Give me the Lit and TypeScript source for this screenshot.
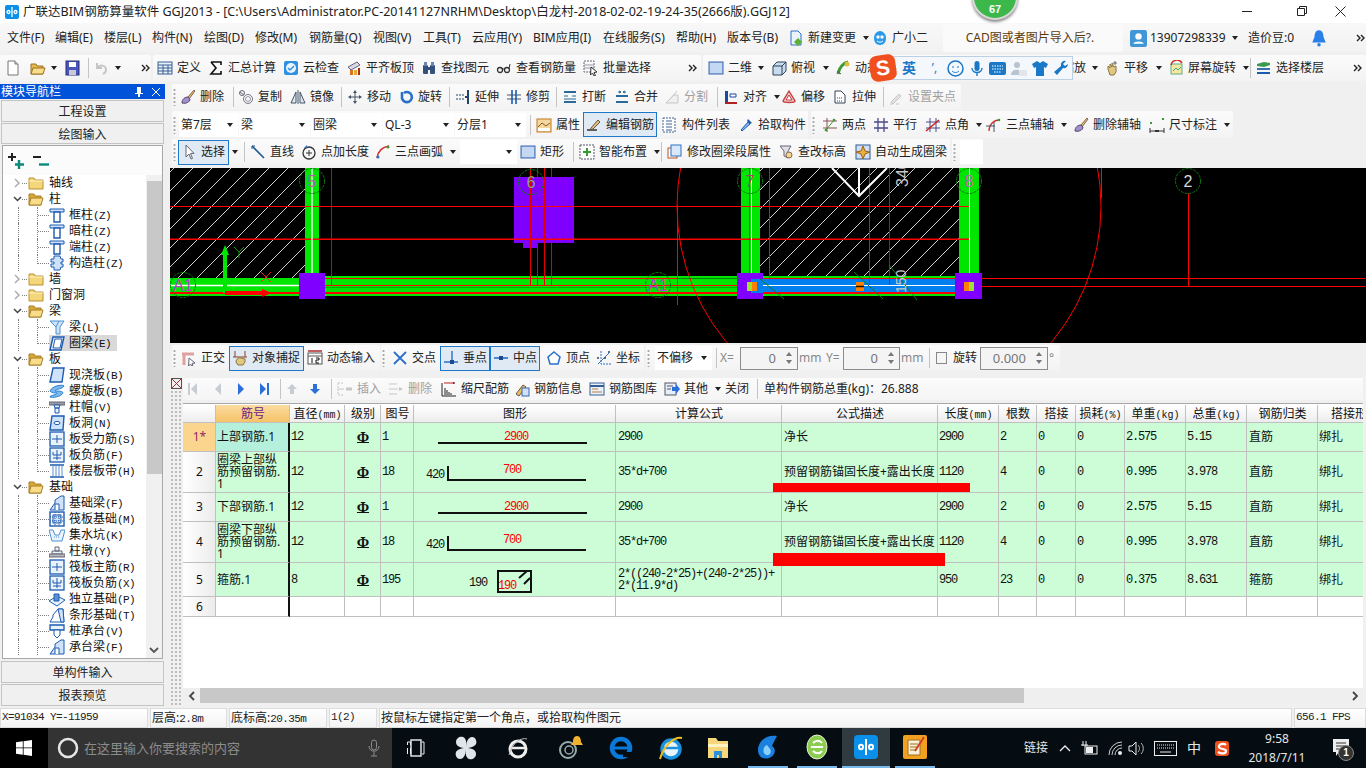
import { LitElement, html, css, svg, TemplateResult } from "lit";
import { customElement } from "lit/decorators.js";
import { classMap } from "lit/directives/class-map.js";

type Item = {
  i?: string; t?: string; w: number; a?: boolean; on?: boolean; off?: boolean;
  sep?: boolean; grip?: boolean; dd?: string; gap?: boolean; lbl?: string; spin?: string; chk?: boolean;
};

const B = "#1c5bb0", L = "#cfe2fb";
const I: Record<string, TemplateResult> = {
  new: svg`<path d="M3 1h7l3 3v11H3z" fill="#fff" stroke="#777"/><path d="M10 1v3h3" fill="#ddd" stroke="#777"/>`,
  open: svg`<path d="M1 4h5l1 2h6v8H1z" fill="#e8b850" stroke="#9a7420"/><path d="M3 8h12l-2 6H1z" fill="#f6dc8c" stroke="#9a7420"/>`,
  save: svg`<rect x="2" y="1" width="13" height="14" fill="#4a55b8" stroke="#26307c"/><rect x="5" y="2" width="7" height="5" fill="#fff"/><rect x="5" y="10" width="7" height="5" fill="#c8c8d8"/>`,
  undo: svg`<path d="M4 3v5h5M4 8c3-4 9-3 9 2 0 2-1 3-3 4" fill="none" stroke="#bbb" stroke-width="2"/>`,
  def: svg`<rect x="1" y="2" width="14" height="12" fill="#e8f0fa" stroke="#3a5f92"/><path d="M1 5h14M1 8h14M1 11h14M6 5v9M11 5v9" stroke="#3a5f92"/>`,
  sigma: svg`<path d="M3 2h10v3M13 14H3l5-6-5-6M3 14h10v-3" fill="none" stroke="#111" stroke-width="1.6"/>`,
  cloud: svg`<rect x="1" y="1" width="14" height="14" rx="2" fill="#2f8fe0"/><circle cx="8" cy="8" r="5" fill="#eaf4fd"/><path d="M5 8l2 2 4-4" fill="none" stroke="#2f8fe0" stroke-width="1.5"/>`,
  flat: svg`<path d="M2 7l9-5 3 3-9 5z" fill="#d8d8e8" stroke="#667"/><rect x="4" y="10" width="3" height="5" fill="#d87020"/><rect x="8" y="10" width="3" height="5" fill="#e8a830"/><rect x="12" y="8" width="2" height="7" fill="#a83010"/>`,
  find: svg`<rect x="2" y="5" width="5" height="9" rx="1" fill="#34507c"/><rect x="9" y="5" width="5" height="9" rx="1" fill="#34507c"/><rect x="3" y="2" width="3" height="4" fill="#6a86ac"/><rect x="10" y="2" width="3" height="4" fill="#6a86ac"/><rect x="6" y="7" width="4" height="3" fill="#34507c"/>`,
  glass: svg`<circle cx="4" cy="10" r="2.5" fill="none" stroke="#333" stroke-width="1.3"/><circle cx="11" cy="10" r="2.5" fill="none" stroke="#333" stroke-width="1.3"/><path d="M6 9h3M13 9l1-5" stroke="#333"/>`,
  batch: svg`<rect x="1" y="1" width="10" height="11" fill="none" stroke="#667" stroke-dasharray="2 1"/><path d="M1 5h10M1 8h10" stroke="#99a"/><path d="M8 7l6 5-3 .5 1.5 3-1.5.5-1.5-3-2 2z" fill="#fff" stroke="#333"/>`,
  rect: svg`<rect x="1" y="2" width="14" height="12" fill="#a8c4ee" stroke="#3a68b0"/><rect x="2" y="3" width="12" height="10" fill="#c4d8f4"/>`,
  cube: svg`<path d="M2 6l4-4h9v9l-4 4H2z" fill="#c8dcf0" stroke="#345"/><path d="M2 6h9v9M11 6l4-4" fill="none" stroke="#345"/>`,
  orbit: svg`<path d="M3 14C4 8 8 3 13 2" stroke="#3a9a30" stroke-width="3" fill="none"/><circle cx="12" cy="4" r="2.5" fill="#d8c040"/><path d="M2 11l4 3" stroke="#556"/>`,
  hand: svg`<path d="M4 9V6l2 2V4l2 3V3l2 4 2-1v6l-2 3H6z" fill="#e0c880" stroke="#8a7440"/><path d="M11 1v4M9 3h4" stroke="#667"/>`,
  screen: svg`<rect x="3" y="4" width="11" height="10" fill="#f4e8a0" stroke="#6a8"/><path d="M3 5a6 6 0 0 1 11-2" fill="none" stroke="#d03020" stroke-width="1.5"/><path d="M5 11l3-3 2 2 3-3" stroke="#3a9" fill="none"/>`,
  floors: svg`<path d="M1 4l7-2 6 1v2L8 7 1 6z" fill="#3a9a50"/><path d="M1 8h13v2H1z" fill="#3a70b0"/><path d="M1 12h13v2H1z" fill="#1c5bb0"/>`,
  del: svg`<path d="M8 8l6-7 1 1-6 8z" fill="#e0c060" stroke="#865"/><path d="M2 14c0-4 3-6 6-6l2 2c0 3-4 5-8 4z" fill="#a090d0" stroke="#546"/>`,
  copy: svg`<path d="M2 3l4 3" stroke="#667"/><circle cx="4" cy="4" r="2.5" fill="none" stroke="#667"/><circle cx="10" cy="10" r="4.5" fill="none" stroke="#778"/><circle cx="10" cy="10" r="2.5" fill="none" stroke="#99a"/>`,
  mirror: svg`<path d="M6 3v11H1zM10 3v11h5z" fill="#dde6f2" stroke="#456"/><path d="M8 1v14" stroke="#456"/>`,
  move: svg`<path d="M8 1l2 3H6zM8 15l-2-3h4zM1 8l3-2v4zM15 8l-3 2V6z" fill="#456"/><path d="M8 3v10M3 8h10" stroke="#456"/>`,
  rotate: svg`<path d="M4 3v4a5 5 0 1 0 2-3" fill="none" stroke="#2a70c8" stroke-width="2.6"/>`,
  extend: svg`<path d="M1 6h8M1 10h8" stroke="#246" stroke-dasharray="2 1"/><path d="M13 1v14" stroke="#246" stroke-width="2"/><rect x="10" y="7" width="2" height="2" fill="#246"/>`,
  trim: svg`<path d="M1 6h14M1 10h14" stroke="#456"/><path d="M6 1v14M10 1v14" stroke="#1c5bb0" stroke-width="1.6"/>`,
  brk: svg`<path d="M2 3h12M2 13h12" stroke="#2a6a9a" stroke-width="2"/><path d="M2 7h4M10 7h4M2 10h12" stroke="#2a6a9a"/>`,
  merge: svg`<path d="M2 7h12M2 13h12" stroke="#2a6a9a" stroke-width="2"/><path d="M4 3h3M9 3h3M5 2l2 1-2 1M11 2L9 3l2 1" fill="none" stroke="#2a6a9a"/>`,
  split: svg`<path d="M2 14l8-8h4v8z" fill="#eee" stroke="#bbb"/><path d="M6 10l7-8" stroke="#bbb"/>`,
  align: svg`<rect x="2" y="2" width="3" height="12" fill="#1c4aa0"/><path d="M7 5h6v3H7z" fill="#fff" stroke="#1c4aa0"/><path d="M2 14h12" stroke="#b02020" stroke-width="2"/>`,
  offset: svg`<path d="M8 2l6 10c0 2-12 2-12 0z" fill="#f6c8c8" stroke="#c04040" stroke-width="1.4"/><path d="M8 6l3 5H5z" fill="#fff" stroke="#c04040"/>`,
  stretch: svg`<path d="M3 2h6l4 4v8H3z" fill="#fff" stroke="#345"/><path d="M5 9h6M5 12h6" stroke="#345" stroke-dasharray="1 1"/>`,
  pen: svg`<path d="M3 13l8-8 2 2-8 8z" fill="#ddd" stroke="#bbb"/><path d="M2 15h3M8 15h3" stroke="#bbb"/>`,
  attr: svg`<rect x="1" y="2" width="14" height="13" fill="#f4d8a0" stroke="#c07820"/><path d="M2 10l4-4 4 3 4-3" stroke="#8a5a10" fill="none"/><rect x="2" y="11" width="12" height="3" fill="#fff"/>`,
  edit: svg`<path d="M1 13h10" stroke="#333" stroke-width="1.5"/><path d="M5 11l7-8 2 2-7 7-3 1z" fill="#e0c080" stroke="#654"/>`,
  list: svg`<rect x="1" y="1" width="12" height="14" fill="#fff" stroke="#3a5f92" stroke-dasharray="2 1"/><path d="M4 4h6M4 7h6M4 10h6M4 13h6" stroke="#3a5f92"/>`,
  pick: svg`<path d="M3 13l7-8 2 2-8 7z" fill="#8ab8e8" stroke="#1c5bb0"/><path d="M10 2l4 4-2 1-3-3z" fill="#1c5bb0"/>`,
  two: svg`<path d="M1 4h14M1 11h14M5 1v14" stroke="#8a5050"/><path d="M3 14L13 2" stroke="#3a9a30"/><circle cx="4" cy="13" r="1.3" fill="#3a9a30"/><circle cx="12" cy="3" r="1.3" fill="#3a9a30"/>`,
  para: svg`<path d="M1 5h14M1 11h14M5 1v14M11 1v14" stroke="#4a4a8a" stroke-width="1.3"/>`,
  angle: svg`<path d="M1 5h14M1 11h14M5 1v14M11 1v14" stroke="#4a4a8a"/><path d="M1 14L14 3" stroke="#d02020" stroke-width="1.5"/>`,
  arc3: svg`<path d="M3 14C3 8 7 3 14 3" fill="none" stroke="#d03030" stroke-width="1.3"/><path d="M0 9h9M8 5v10" stroke="#456"/><circle cx="13" cy="3" r="1.3" fill="#3a9a30"/>`,
  dim: svg`<path d="M1 14h14M1 11v5M15 11v5" stroke="#333"/><rect x="1" y="5" width="2" height="2" fill="#3a9a30"/><rect x="13" y="1" width="2" height="2" fill="#3a9a30"/><path d="M6 14h4" stroke="#333" stroke-width="2"/>`,
  cursor: svg`<path d="M5 1v12l3-3 2 5 1.5-.6-2-5H13z" fill="#fff" stroke="#667"/>`,
  line: svg`<path d="M2 2l12 12" stroke="#245a90" stroke-width="1.6"/><path d="M2 2v3M2 2h3" stroke="#245a90"/>`,
  dot: svg`<circle cx="8" cy="9" r="6" fill="none" stroke="#333" stroke-width="1.3"/><path d="M8 6v6M5 9h6" stroke="#333"/><path d="M3 4l3-3v3z" fill="#2a70c8"/>`,
  arc: svg`<path d="M2 14C3 7 7 3 14 2" fill="none" stroke="#d03030" stroke-width="1.6"/><circle cx="3" cy="13" r="1.5" fill="#2a70c8"/><circle cx="13" cy="3" r="1.5" fill="#3a9a30"/>`,
  smart: svg`<rect x="1" y="1" width="14" height="14" fill="#fff" stroke="#556" stroke-dasharray="2 1"/><path d="M8 4v8M4 8h8" stroke="#3a9a30" stroke-width="2"/>`,
  mod: svg`<rect x="1" y="4" width="9" height="10" fill="#fff" stroke="#c05020"/><rect x="4" y="1" width="10" height="11" fill="#d8e8f8" stroke="#2a70c8"/>`,
  elev: svg`<path d="M2 2h11l-3 5v7l-4-2V7z" fill="#e0e0e8" stroke="#667"/><circle cx="11" cy="11" r="3" fill="#f0d890" stroke="#865"/>`,
  auto: svg`<rect x="1" y="1" width="14" height="14" fill="#d0e0f4" stroke="#2a5a9a"/><path d="M8 2l2 5 5 1-5 2-2 5-2-5-5-2 5-1z" fill="#e8b040" stroke="#a06010"/>`,
  ortho: svg`<path d="M1 4h12M3 4v11" stroke="#e0a0a0" stroke-width="3"/><path d="M8 8l6 5-3 .4 1 2-1.4.6-1-2-2 2z" fill="#fff" stroke="#667"/>`,
  snap: svg`<path d="M3 1v6M13 1v6" stroke="#8a4020"/><path d="M1 7h14" stroke="#8a4020"/><path d="M4 12c0-3 3-5 5-4l4 1v3l-2 3H6z" fill="#e0c880" stroke="#8a7440"/>`,
  dyn: svg`<rect x="1" y="3" width="14" height="11" fill="#fff" stroke="#555"/><path d="M1 1h14" stroke="#c06060" stroke-width="2"/><path d="M1 6h14" stroke="#555"/><path d="M5 8v5M9 8h3v2H9v3h3" fill="none" stroke="#111"/>`,
  cross: svg`<path d="M2 2l12 12M14 2L2 14" stroke="#2a70c8" stroke-width="1.8"/>`,
  perp: svg`<path d="M9 1v11M1 12h14" stroke="#2a70c8" stroke-width="1.4"/><rect x="7" y="10" width="4" height="4" fill="#1c4a90"/>`,
  mid: svg`<path d="M1 8h14" stroke="#2a70c8" stroke-width="1.6"/><rect x="6" y="6" width="4" height="4" fill="#1c4a90"/>`,
  vertex: svg`<path d="M8 2l6 5-2 7H4L2 7z" fill="#fff" stroke="#2a70c8" stroke-width="1.5"/>`,
  coord: svg`<path d="M5 1v13h10" stroke="#2a70c8" stroke-dasharray="2 1" fill="none"/><path d="M2 14L13 3" stroke="#2a70c8"/><circle cx="2" cy="8" r="1" fill="#345"/><circle cx="13" cy="2" r="1" fill="#345"/><circle cx="9" cy="8" r="1" fill="#345"/>`,
  first: svg`<path d="M12 2v12L6 8z" fill="#c8ccd4"/><rect x="3" y="2" width="2" height="12" fill="#c8ccd4"/>`,
  prev: svg`<path d="M11 2v12L5 8z" fill="#c8ccd4"/>`,
  next: svg`<path d="M5 2v12l6-6z" fill="#2a70d8"/>`,
  last: svg`<path d="M4 2v12l6-6z" fill="#2a70d8"/><rect x="11" y="2" width="2" height="12" fill="#2a70d8"/>`,
  up: svg`<path d="M8 3l5 5h-3v5H6V8H3z" fill="#c8ccd4"/>`,
  down: svg`<path d="M8 13l5-5h-3V3H6v5H3z" fill="#2a70d8"/>`,
  ins: svg`<path d="M1 2h6M1 14h6M1 2v12" stroke="#bbb" stroke-dasharray="2 1" fill="none"/><path d="M1 8h6" stroke="#bbb"/><path d="M9 8h6" stroke="#bbb" stroke-width="3"/>`,
  rm: svg`<path d="M1 3h8M1 13h8M1 8h9" stroke="#bbb" fill="none"/><path d="M11 6l4 2-4 2z" fill="#bbb"/>`,
  scale: svg`<path d="M1 2v13h14" stroke="#222" fill="none"/><path d="M4 14V7M6 14V9M8 14v-3M10 14v-2" stroke="#222"/><path d="M3 2h11" stroke="#c02020"/><path d="M12 1l2 1-2 1" fill="#222"/>`,
  info: svg`<path d="M2 13l7-9 3 2-7 9z" fill="#e8c060" stroke="#654"/><rect x="8" y="7" width="7" height="8" fill="#d0e0f8" stroke="#3a68b0"/>`,
  lib: svg`<rect x="1" y="2" width="14" height="12" fill="#e8f0fa" stroke="#3a5f92"/><path d="M1 5h14" stroke="#3a5f92" stroke-width="2"/><path d="M3 8h6M3 11h10" stroke="#c08040"/>`,
  other: svg`<rect x="1" y="2" width="11" height="12" fill="#e8eef8" stroke="#556"/><path d="M3 5h6M3 8h4" stroke="#556"/><path d="M8 6h4V3l4 5-4 5v-3H8z" fill="#2a70d8"/>`,
  change: svg`<path d="M3 1h7l3 3v11H3z" fill="#eaf3fc" stroke="#2a70c8"/><path d="M10 8l4 4-4 4-4-4z" fill="#5ab030"/>`,
  xiao: svg`<path d="M2 8c0-4 3-7 6-7s6 3 6 7-2 7-6 7-6-3-6-7z" fill="#2a9ae8"/><circle cx="6" cy="7" r="1.7" fill="#fff"/><circle cx="10" cy="7" r="1.7" fill="#fff"/><path d="M5 11c2 1.500 4 1.500 6 0" stroke="#fff" fill="none"/>`,
  user: svg`<rect x="0" y="0" width="16" height="16" rx="2" fill="#3f97d8"/><circle cx="8" cy="6" r="3" fill="#fff"/><path d="M3 13c1-3 9-3 10 0z" fill="#fff"/>`,
  bell: svg`<path d="M8 1c3 0 4 3 4 6l2 5H2l2-5c0-3 1-6 4-6z" fill="#2a80e8"/><circle cx="8" cy="14" r="1.600" fill="#2a80e8"/>`,
};

const T: Record<string, TemplateResult> = {
  col: svg`<path d="M1 2h14v3H1z" fill="${L}" stroke="${B}"/><path d="M5 5h6v10H5z" fill="#fff" stroke="${B}" stroke-width="1.400"/>`,
  gz: svg`<path d="M5 1h6l1 3h2v3h-2v2h2v3h-2l-1 3H5v-3H2V9h3V7H2V4h3z" fill="${L}" stroke="${B}"/>`,
  beam: svg`<path d="M1 2h14l-4 6v7H7V8z" fill="${L}" stroke="#4a90d0"/><path d="M10 2l-3 6" stroke="#4a90d0"/>`,
  ring: svg`<path d="M4 2h11l-3 13H1z" fill="#e8f0fc" stroke="${B}" stroke-width="1.400"/><path d="M6 4h7l-2 9H4z" fill="#fff" stroke="${B}"/>`,
  slab: svg`<path d="M4 1h11l-2 14H1z" fill="${L}" stroke="${B}" stroke-width="1.400"/>`,
  spiral: svg`<path d="M1 8c2-5 12-7 14-5-1 3-9 3-9 5 3 0 8 0 8 2-2 4-11 5-13 4 0-2 7-2 7-4-2 0-5 0-7-2z" fill="#7ab8ee" stroke="#2a80d0"/>`,
  cap: svg`<rect x="0" y="3" width="16" height="3" fill="#9a9aa4" stroke="#667"/><path d="M5 6h6l-1 3H6zM6 9h4v5H6z" fill="#e8f0fc" stroke="${B}"/>`,
  hole: svg`<path d="M3 1h12l-1 14H1z" fill="${L}" stroke="${B}" stroke-width="1.400"/><ellipse cx="8" cy="8" rx="3" ry="1.600" fill="#fff" stroke="${B}"/>`,
  bars: svg`<rect x="1" y="1" width="14" height="14" fill="#eaf2fc" stroke="${B}" stroke-width="1.300"/><path d="M8 4v8M3 8h10" stroke="${B}"/>`,
  nbar: svg`<rect x="1" y="1" width="14" height="14" fill="#eaf2fc" stroke="${B}" stroke-width="1.300"/><path d="M4 5v3h8V5M8 3v10M4 11h8" fill="none" stroke="${B}"/>`,
  band: svg`<path d="M1 2h14M1 14h14" stroke="${B}" stroke-width="1.600"/><path d="M4 3v10M7 3v10M10 3v10M13 3v10" stroke="#5a90d0"/>`,
  fbeam: svg`<path d="M1 15l5-7V5l6-4h3v14z" fill="${L}" stroke="${B}"/><path d="M6 15V9h4v6" fill="#fff" stroke="${B}"/>`,
  raft: svg`<rect x="1" y="1" width="14" height="14" fill="#fff" stroke="${B}" stroke-width="1.400"/><rect x="4" y="4" width="8" height="8" fill="${L}" stroke="${B}"/><path d="M1 6h14M1 10h14M6 1v14M10 1v14" stroke="${B}" stroke-dasharray="1 1"/>`,
  pit: svg`<path d="M0 3h4l2 5h4l2-5h4l-3 11H3z" fill="#eaf2fc" stroke="#4a90d0"/><path d="M5 10h6" stroke="#4a90d0" stroke-dasharray="1 1"/>`,
  pier: svg`<path d="M6 4h4v4H6zM3 8h10v3H3z" fill="#eaf2fc" stroke="#667"/><rect x="0" y="11" width="16" height="3" fill="#b4b4bc" stroke="#667"/>`,
  ind: svg`<path d="M0 10l8-5 8 4-8 6z" fill="#eaf2fc" stroke="${B}"/><path d="M5 3h5v7H5z" fill="#5a90d0" stroke="${B}"/>`,
  strip: svg`<path d="M1 15l3-5V8l5-6h5l1 13z" fill="#fff" stroke="${B}"/><path d="M9 2l5 0 1 13h-3z" fill="${L}" stroke="${B}"/>`,
  pile: svg`<path d="M1 2h14v5H1z" fill="#eaf2fc" stroke="${B}" stroke-width="1.300"/><path d="M5 7h6v5L8 15l-3-3z" fill="#fff" stroke="${B}"/>`,
};

const tree: { t: string; k?: string; i?: string; open?: boolean; folder?: boolean; last?: boolean; sel?: boolean }[] = [
  { t: "轴线", folder: true },
  { t: "柱", folder: true, open: true },
  { t: "框柱", k: "(Z)", i: "col" }, { t: "暗柱", k: "(Z)", i: "col" }, { t: "端柱", k: "(Z)", i: "col" }, { t: "构造柱", k: "(Z)", i: "gz", last: true },
  { t: "墙", folder: true }, { t: "门窗洞", folder: true },
  { t: "梁", folder: true, open: true },
  { t: "梁", k: "(L)", i: "beam" }, { t: "圈梁", k: "(E)", i: "ring", last: true, sel: true },
  { t: "板", folder: true, open: true },
  { t: "现浇板", k: "(B)", i: "slab" }, { t: "螺旋板", k: "(B)", i: "spiral" }, { t: "柱帽", k: "(V)", i: "cap" }, { t: "板洞", k: "(N)", i: "hole" },
  { t: "板受力筋", k: "(S)", i: "bars" }, { t: "板负筋", k: "(F)", i: "nbar" }, { t: "楼层板带", k: "(H)", i: "band", last: true },
  { t: "基础", folder: true, open: true },
  { t: "基础梁", k: "(F)", i: "fbeam" }, { t: "筏板基础", k: "(M)", i: "raft" }, { t: "集水坑", k: "(K)", i: "pit" }, { t: "柱墩", k: "(Y)", i: "pier" },
  { t: "筏板主筋", k: "(R)", i: "bars" }, { t: "筏板负筋", k: "(X)", i: "nbar" }, { t: "独立基础", k: "(P)", i: "ind" }, { t: "条形基础", k: "(T)", i: "strip" },
  { t: "桩承台", k: "(V)", i: "pile" }, { t: "承台梁", k: "(F)", i: "fbeam" },
];

const menus = [
  ["文件(F)", 48], ["编辑(E)", 49], ["楼层(L)", 48], ["构件(N)", 52], ["绘图(D)", 51], ["修改(M)", 54], ["钢筋量(Q)", 64], ["视图(V)", 50],
  ["工具(T)", 49], ["云应用(Y)", 61], ["BIM应用(I)", 70], ["在线服务(S)", 73], ["帮助(H)", 51], ["版本号(B)", 59],
] as [string, number][];

const tb1a: Item[] = [
  { i: "new", w: 26 }, { i: "open", w: 23 }, { gap: true, a: true, w: 10 }, { i: "save", w: 26 }, { sep: true, w: 6 }, { i: "undo", w: 20, off: true }, { gap: true, a: true, w: 14 },
];
const tb1b: Item[] = [
  { i: "def", t: "定义", w: 51 }, { i: "sigma", t: "汇总计算", w: 75 }, { i: "cloud", t: "云检查", w: 63 }, { i: "flat", t: "平齐板顶", w: 75 },
  { i: "find", t: "查找图元", w: 75 }, { i: "glass", t: "查看钢筋量", w: 87 }, { i: "batch", t: "批量选择", w: 70 },
];
const tb1c: Item[] = [
  { i: "rect", t: "二维", w: 47 }, { gap: true, a: true, w: 16 }, { i: "cube", t: "俯视", w: 50 }, { gap: true, a: true, w: 14 }, { i: "orbit", t: "动态观察", w: 76 },
  { gap: true, w: 151 }, { t: "缩放", w: 28 }, { gap: true, a: true, w: 14 },
  { i: "hand", t: "平移", w: 50 }, { gap: true, a: true, w: 14 }, { i: "screen", t: "屏幕旋转", a: true, w: 80 }, { sep: true, w: 8 }, { i: "floors", t: "选择楼层", w: 80 },
];
const tb2: Item[] = [
  { grip: true, w: 6 }, { i: "del", t: "删除", w: 52 }, { sep: true, w: 6 }, { i: "copy", t: "复制", w: 52 }, { i: "mirror", t: "镜像", w: 49 }, { sep: true, w: 8 },
  { i: "move", t: "移动", w: 51 }, { i: "rotate", t: "旋转", w: 49 }, { sep: true, w: 8 }, { i: "extend", t: "延伸", w: 51 }, { i: "trim", t: "修剪", w: 49 }, { sep: true, w: 7 },
  { i: "brk", t: "打断", w: 52 }, { i: "merge", t: "合并", w: 50 }, { i: "split", t: "分割", w: 51, off: true }, { sep: true, w: 8 },
  { i: "align", t: "对齐", a: true, w: 58 }, { i: "offset", t: "偏移", w: 51 }, { i: "stretch", t: "拉伸", w: 50 }, { sep: true, w: 6 }, { i: "pen", t: "设置夹点", w: 75, off: true },
];
const tb3a: Item[] = [
  { grip: true, w: 7 }, { dd: "第7层", w: 60 }, { dd: "梁", w: 72 }, { dd: "圈梁", w: 72 }, { dd: "QL-3", w: 72 }, { dd: "分层1", w: 72 }, { sep: true, w: 7 },
  { i: "attr", t: "属性", w: 49 }, { i: "edit", t: "编辑钢筋", w: 74, on: true }, { gap: true, w: 3 }, { i: "list", t: "构件列表", w: 76 }, { i: "pick", t: "拾取构件", w: 72 },
];
const tb3b: Item[] = [
  { grip: true, w: 9 }, { i: "two", t: "两点", w: 51 }, { i: "para", t: "平行", w: 52 }, { i: "angle", t: "点角", a: true, w: 61 },
  { i: "arc3", t: "三点辅轴", a: true, w: 87 }, { i: "del", t: "删除辅轴", w: 76 }, { i: "dim", t: "尺寸标注", a: true, w: 86 },
];
const tb4a: Item[] = [
  { grip: true, w: 6 }, { i: "cursor", t: "选择", w: 51, on: true }, { gap: true, a: true, w: 11 }, { sep: true, w: 8 }, { i: "line", t: "直线", w: 51 }, { i: "dot", t: "点加长度", w: 74 },
  { i: "arc", t: "三点画弧", a: true, w: 87 }, { dd: "", w: 58 }, { i: "rect", t: "矩形", w: 52 }, { sep: true, w: 7 }, { i: "smart", t: "智能布置", a: true, w: 80 }, { sep: true, w: 8 },
  { i: "mod", t: "修改圈梁段属性", w: 111 }, { i: "elev", t: "查改标高", w: 77 }, { i: "auto", t: "自动生成圈梁", w: 97 },
];
const snapA: Item[] = [
  { grip: true, w: 7 }, { i: "ortho", t: "正交", w: 50 }, { i: "snap", t: "对象捕捉", w: 75, on: true }, { gap: true, w: 1 }, { i: "dyn", t: "动态输入", w: 75 },
];
const snapB: Item[] = [
  { grip: true, w: 9 }, { i: "cross", t: "交点", w: 50 }, { i: "perp", t: "垂点", w: 50, on: true }, { i: "mid", t: "中点", w: 50, on: true }, { gap: true, w: 4 },
  { i: "vertex", t: "顶点", w: 50 }, { i: "coord", t: "坐标", w: 50 },
];
const snapC: Item[] = [
  { grip: true, w: 9 }, { dd: "不偏移", w: 58 }, { sep: true, w: 6 }, { lbl: "X=", w: 21 }, { spin: "0", w: 58 }, { lbl: "mm", w: 27 }, { lbl: "Y=", w: 18 }, { spin: "0", w: 57 }, { lbl: "mm", w: 26 },
  { sep: true, w: 6 }, { chk: true, w: 19 }, { t: "旋转", w: 29 }, { spin: "0.000", w: 68 }, { lbl: "°", w: 12 },
];
const gridTb: Item[] = [
  { i: "first", w: 20 }, { i: "prev", w: 30 }, { i: "next", w: 16 }, { i: "last", w: 30 }, { sep: true, w: 2 }, { i: "up", w: 22 }, { i: "down", w: 24 }, { sep: true, w: 8 },
  { i: "ins", t: "插入", w: 51, off: true }, { i: "rm", t: "删除", w: 53, off: true }, { i: "scale", t: "缩尺配筋", w: 73 }, { i: "info", t: "钢筋信息", w: 75 }, { i: "lib", t: "钢筋图库", w: 75 },
  { i: "other", t: "其他", a: true, w: 61 }, { t: "关闭", w: 29 }, { sep: true, w: 10 }, { t: "单构件钢筋总重(kg)：26.888", w: 200 },
];

const headers = ["", "筋号", "直径(mm)", "级别", "图号", "图形", "计算公式", "公式描述", "长度(mm)", "根数", "搭接", "损耗(%)", "单重(kg)", "总重(kg)", "钢筋归类", "搭接形式"];
const rows = [
  { n: "1*", name: "上部钢筋.1", d: "12", no: "1", shape: 1, f: "2900", desc: "净长", len: "2900", c: "2", w1: "2.575", w2: "5.15", cat: "直筋", h: 29 },
  { n: "2", name: "圈梁上部纵\n筋预留钢筋.\n1", d: "12", no: "18", shape: 2, f: "35*d+700", desc: "预留钢筋锚固长度+露出长度", len: "1120", c: "4", w1: "0.995", w2: "3.978", cat: "直筋", h: 41 },
  { n: "3", name: "下部钢筋.1", d: "12", no: "1", shape: 1, f: "2900", desc: "净长", len: "2900", c: "2", w1: "2.575", w2: "5.15", cat: "直筋", h: 29 },
  { n: "4", name: "圈梁下部纵\n筋预留钢筋.\n1", d: "12", no: "18", shape: 2, f: "35*d+700", desc: "预留钢筋锚固长度+露出长度", len: "1120", c: "4", w1: "0.995", w2: "3.978", cat: "直筋", h: 41 },
  { n: "5", name: "箍筋.1", d: "8", no: "195", shape: 3, f: "2*((240-2*25)+(240-2*25))+\n2*(11.9*d)", desc: "", len: "950", c: "23", w1: "0.375", w2: "8.631", cat: "箍筋", h: 34 },
];

@customElement("app-root")
export class AppRoot extends LitElement {
  static override styles = css`
    :host { display: block; width: 1366px; height: 768px; overflow: hidden; }
    * { box-sizing: border-box; }
    .app { position: relative; width: 1366px; height: 768px; display: flex; flex-direction: column; background: #f0f0f0; overflow: hidden;
      font: 12px/16px "Noto Sans", "Noto Sans CJK SC", sans-serif; color: #222; }
    svg { display: block; flex: none; }

    .title { height: 23px; background: #fff; display: flex; align-items: center; padding-left: 5px; font-size: 12.5px; color: #222; white-space: nowrap; }
    .title .txt { margin-left: 4px; }
    .winbtns { margin-left: auto; display: flex; }
    .winbtns svg { margin: 0 18px 0 27px; }
    .badge { position: absolute; left: 972px; top: -26px; width: 46px; height: 46px; border-radius: 50%; background: #3cb84a; border: 2px solid #d8d8d8;
      box-shadow: 0 2px 3px #888; color: #fff; font: bold 11px/16px "Liberation Sans", sans-serif; text-align: center; padding-top: 25px; }

    .menu { height: 29px; display: flex; align-items: center; padding: 1px 0 0 7px; background: linear-gradient(#f8f8f8, #f2f2f2); white-space: nowrap; }
    .menu .m { flex: none; }
    .cad { width: 186px; height: 28px; margin: 0 7px 0 7px; background: #fafafa; color: #5a3a10; text-align: center; line-height: 28px; border-radius: 2px; padding-right: 6px; }

    .strip { display: flex; height: 26px; align-items: stretch; }
    .grp { display: flex; align-items: center; background: linear-gradient(#fbfbfb, #f3f3f3); border-radius: 2px; white-space: nowrap; }
    .tb1 { height: 32px; padding-top: 3px; padding-bottom: 3px; }
    .tb1 .grp { height: 26px; }

    .it { flex: none; height: 24px; display: flex; align-items: center; gap: 4px; padding-left: 2px; overflow: visible; white-space: nowrap; }
    .it.on { background: #dfeaf5; border: 1px solid #1d78c8; padding-left: 2px; height: 25px; }
    .it.off { color: #a0a0a0; }
    .it.off svg { opacity: .8; }
    .it.gap { padding-left: 0; justify-content: center; }
    .it.icononly { padding-left: 0; justify-content: center; }
    .arr { width: 0; height: 0; border: 3px solid transparent; border-top: 4px solid #222; border-bottom: 0; margin-left: 3px; flex: none; }
    .gap .arr { margin-left: 0; }
    .sep { flex: none; height: 20px; display: flex; justify-content: center; }
    .sep i { display: block; width: 1px; height: 100%; background: #c4c4c4; }
    .grip { flex: none; height: 18px; background: radial-gradient(circle, #a8a8a8 1px, transparent 1.2px) 1px 0 / 3px 4px repeat-y; }
    .dd { flex: none; height: 24px; padding-right: 1px; }
    .dd div { height: 100%; background: #fff; display: flex; align-items: center; justify-content: space-between; padding: 0 5px 0 2px; }
    .dd .arr { margin: 0; }
    .lbl { flex: none; color: #888; padding-left: 1px; }
    .spin { flex: none; height: 23px; border: 1px solid #8c8c8c; background: #f4f4f4; color: #777; display: flex; align-items: center; justify-content: flex-end; font-size: 13px; }
    .spin span { padding-right: 5px; }
    .spin b { flex: none; width: 16px; height: 100%; display: flex; flex-direction: column; justify-content: space-around; align-items: center; padding: 3px 0; }
    .spin b i { width: 0; height: 0; border: 3px solid transparent; border-bottom: 4px solid #777; border-top: 0; }
    .spin b i + i { border-top: 4px solid #777; border-bottom: 0; }
    .chk { flex: none; display: flex; align-items: center; padding-left: 4px; }
    .chk i { display: block; width: 11px; height: 12px; border: 1px solid #888; background: #f6f6f6; }

    .body { height: 623px; display: flex; }
    .nav { flex: none; width: 165px; margin-right: 5px; display: flex; flex-direction: column; }
    .navhead { height: 15px; background: #0052d9; color: #fff; display: flex; align-items: center; padding-left: 1px; white-space: nowrap; line-height: 15px; }
    .navhead svg:first-of-type { margin-left: auto; }
    .navbtn { flex: none; height: 22px; margin: 1px 1px 0 1px; background: #f0f0f0; border: 1px solid #c4c4c4; text-align: center; line-height: 22px; }
    .navbtn.tall { height: 21px; }
    .treebox { flex: none; height: 514px; margin: 1px 2px 1px 2px; border: 1px solid #a8a8a8; background: #fff; display: flex; flex-direction: column; }
    .treetools { flex: none; height: 29px; display: flex; align-items: center; padding-left: 4px; gap: 7px; background: #fbfbfb; }
    .treewrap { flex: 1; min-height: 0; display: flex; }
    .treelist { flex: 1; min-width: 0; overflow: hidden; }
    .row { height: 16px; display: flex; align-items: center; white-space: nowrap; color: #111; }
    .chev { flex: none; width: 9px; margin-left: 10px; }
    .hdots { flex: none; width: 6px; height: 1px; background: repeating-linear-gradient(to right, #808080 0 1px, transparent 1px 2px); }
    .folder { margin-right: 5px; }
    .v1 { flex: none; width: 19px; height: 16px; margin-left: 15px; border-left: 1px dotted #808080; }
    .elbow { flex: none; width: 12px; height: 16px; border-left: 1px dotted #808080;
      background: repeating-linear-gradient(to right, #808080 0 1px, transparent 1px 2px) 0 8px / 100% 1px no-repeat; }
    .elbow.last { height: 9px; align-self: flex-start; }
    .lab { display: flex; align-items: center; gap: 4px; height: 16px; padding-right: 6px; }
    .lab.sel { background: #d9d9d9; }
    .k { font: 11px/16px "Liberation Mono", monospace; letter-spacing: -.6px; }
    .vbar { flex: none; width: 16px; background: #f0f0f0; display: flex; flex-direction: column; align-items: center; }
    .vbar .th { width: 15px; height: 293px; background: #c8c8c8; margin: 78px 0 auto 0; flex: none; }
    .vbar svg { margin: 4px 0; }
    .vbar svg:first-child { margin-bottom: -86px; margin-top: 6px; }

    .main { flex: 1; min-width: 0; display: flex; flex-direction: column; }
    .main .s2 { margin-top: 1px; height: 27px; }
    .main .s3 { margin-top: 1px; }
    .pad { padding-left: 2px; }
    .p2 { padding-left: 2px; }
    .p3 { padding-left: 3px; }
    .m3 { margin-left: 3px; } .m1 { margin-left: 1px; } .m2 { margin-left: 2px; }
    .blank { flex: none; width: 23px; height: 24px; background: #fff; }
    .canvas { flex: none; margin-top: 3px; height: 175px; background: #000; }
    .snap { margin-top: 2px; }
    .lower { flex: 1; min-height: 0; margin-top: 7px; display: flex; }
    .dock { flex: none; width: 13px; background: radial-gradient(circle, #bdbdbd 1px, transparent 1.2px) 0 0 / 4px 4px; padding-left: 1px; }
    .right { flex: 1; min-width: 0; display: flex; flex-direction: column; padding-right: 3px; }
    .gtb { flex: none; height: 22px; background: linear-gradient(#fbfbfb, #f5f5f5); display: flex; align-items: center; white-space: nowrap; }
    .sheet { position: relative; flex: none; margin-top: 3px; height: 285px; background: #fff; border-top: 1px solid #a8a8a8; padding-top: 1px; overflow: hidden; }
    .cells { display: grid; grid-template-columns: 33px 74px 55px 36px 33px 202px 166px 156px 61px 38px 39px 49px 61px 61px 71px 46px;
      grid-template-rows: 18px 29px 41px 29px 41px 34px 20px; }
    .c { border-right: 1px solid #c0c0c0; border-bottom: 1px solid #c0c0c0; padding-left: 1px; display: flex; align-items: center; overflow: hidden;
      background: #ccfdd6; line-height: 12px; white-space: pre-line; color: #111; }
    .c.blank6 { background: #fff; }
    .c.hd { background: linear-gradient(#fff, #ededed); justify-content: center; white-space: nowrap; overflow: hidden; padding-top: 2px; }
    .c.hd.act { background: linear-gradient(#fbdca0, #f5c268); color: #6a1a8a; }
    .c.hd.clip { justify-content: flex-start; padding-left: 13px; }
    .c.hd .k { font-size: 10px; letter-spacing: 0; line-height: 12px; }
    .c.rh { background: linear-gradient(to right, #fff, #ececec); justify-content: center; }
    .c.rh.act { background: #fbd58e; color: #8a2a6a; }
    .c.nm { border-right: 2px solid #111; }
    .c.nm.act { background: #b5f0dc; }
    .c.mono { font: 12px/12px "Liberation Mono", monospace; letter-spacing: -1.2px; }
    .c.ctr { justify-content: center; }
    .c.sh { padding: 0; }
    .c.d2 { padding-left: 2px; }
    .grade { font: bold 15px/12px "Liberation Serif", serif; border-bottom: 1px solid #111; height: 12px; }
    .redbar { position: absolute; background: #f00; }
    .hbar { flex: none; height: 15px; background: #efefef; display: flex; align-items: center; }
    .hbar .th { width: 824px; height: 15px; background: #c8c8c8; margin-left: 5px; flex: none; }
    .hbar svg { margin-left: 5px; }
    .hbar svg:last-child { margin-left: auto; margin-right: 4px; }

    .status { flex: none; height: 21px; display: flex; gap: 2px; padding-top: 1px; }
    .status div { background: linear-gradient(#fff, #f3f3f3); border: 1px solid #dcdcdc; padding-left: 1px; line-height: 17px; white-space: nowrap; overflow: hidden; }
    .status .mono { font: 11px/17px "Liberation Mono", monospace; letter-spacing: -.6px; }

    .task { flex: none; height: 40px; background: #050d12; display: flex; align-items: stretch; color: #ddd; }
    .start { flex: none; width: 48px; background: #000; display: flex; align-items: center; justify-content: center; }
    .search { flex: none; width: 344px; background: #333; display: flex; align-items: center; padding-left: 9px; color: #8c8c8c; font-size: 13px; }
    .search span { margin-left: 5px; }
    .search svg:last-child { margin-left: auto; margin-right: 12px; }
    .ti { flex: none; display: flex; align-items: center; justify-content: center; position: relative; }
    .ti.run { border-bottom: 2px solid #76b9ed; }
    .ti.cur { background: #2f3b41; }
    .tray { flex: none; display: flex; align-items: center; justify-content: center; font-size: 12px; color: #e6e6e6; }
    .trays { margin-left: 81px; display: flex; flex: 1; }
    .clock { flex-direction: column; line-height: 19px; font-size: 12px; text-align: center; }
    .notif { position: relative; }
    .one { position: absolute; left: 22px; top: 17px; width: 16px; height: 16px; border-radius: 50%; background: #333; border: 1px solid #888; color: #fff; font: bold 10px/14px "Liberation Sans", sans-serif; text-align: center; }

    .ime { position: absolute; left: 870px; top: 55px; height: 26px; display: flex; align-items: center; }
    .ime .s { width: 26px; height: 26px; background: #f0501e; border-radius: 7px; transform: rotate(-8deg); color: #fff; font: bold 21px/26px "Liberation Sans", sans-serif; text-align: center; flex: none; z-index: 1; }
    .ime .bar { margin-left: -11px; width: 188px; height: 24px; background: #f4f8fc; border: 1px solid #bcd0e4; display: flex; align-items: center; padding-left: 16px; color: #1a78c8; }
    .ime .bar b { width: 22px; font-size: 14px; flex: none; }
    .ime .bar span { width: 21px; flex: none; display: flex; justify-content: center; }
  `;

  private icon(n: string, s = 16) {
    return html`<svg width=${s} height=${s} viewBox="0 0 16 16">${I[n]}</svg>`;
  }

  private item(it: Item) {
    const st = `width:${it.w}px`;
    if (it.sep) return html`<div class="sep" style=${st}><i></i></div>`;
    if (it.grip) return html`<div class="grip" style=${st}></div>`;
    if (it.dd !== undefined) return html`<div class="dd" style=${st}><div><span>${it.dd}</span><i class="arr"></i></div></div>`;
    if (it.lbl) return html`<div class="lbl" style=${st}>${it.lbl}</div>`;
    if (it.spin) return html`<div class="spin" style=${st}><span>${it.spin}</span><b><i></i><i></i></b></div>`;
    if (it.chk) return html`<div class="chk" style=${st}><i></i></div>`;
    const cls = { it: true, on: !!it.on, off: !!it.off, gap: !!it.gap, icononly: !it.t && !it.gap };
    return html`<div class=${classMap(cls)} style=${st}>
      ${it.i ? this.icon(it.i) : ""}${it.t ? html`<span>${it.t}</span>` : ""}${it.a ? html`<i class="arr"></i>` : ""}
    </div>`;
  }

  private more() {
    return html`<svg width="10" height="10" viewBox="0 0 10 10"><path d="M1 2l3 3-3 3M5 2l3 3-3 3" fill="none" stroke="#222" stroke-width="1.400"/></svg>`;
  }

  private renderTree() {
    return tree.map((r) => {
      if (r.folder) {
        return html`<div class="row">
          <svg class="chev" width="9" height="16" viewBox="0 0 9 16">
            ${r.open
              ? svg`<path d="M1 6l3.500 3.500L8 6" fill="none" stroke="#444" stroke-width="1.500"/>`
              : svg`<path d="M2 4l4 4-4 4" fill="none" stroke="#b0b0b0" stroke-width="1.600"/>`}
          </svg>
          <i class="hdots"></i>
          <svg class="folder" width="16" height="16" viewBox="0 0 16 16">
            ${r.open
              ? svg`<path d="M1 3h5l1 2h6v9H1z" fill="#d8a838" stroke="#a88028"/><path d="M3 7h12l-2 7H1z" fill="#f8dc88" stroke="#a88028"/>`
              : svg`<path d="M1 3h5l1 2h8v9H1z" fill="#f6d67a" stroke="#b89030"/><path d="M1 6h14" stroke="#fff3c4"/>`}
          </svg>
          <span>${r.t}</span>
        </div>`;
      }
      return html`<div class="row">
        <i class="v1"></i><i class=${classMap({ elbow: true, last: !!r.last })}></i>
        <span class=${classMap({ lab: true, sel: !!r.sel })}>
          <svg width="16" height="16" viewBox="0 0 16 16">${T[r.i as string]}</svg>
          <span>${r.t}<span class="k">${r.k}</span></span>
        </span>
      </div>`;
    });
  }

  private shape(kind: number, h: number) {
    const txt = (x: number, y: number, t: string, red = false) =>
      svg`<text x=${x} y=${y} text-anchor="middle" font-size="12" letter-spacing="-1.200" font-family="Liberation Mono, monospace" fill=${red ? "#f00" : "#111"}>${t}</text>`;
    let c;
    if (kind === 1) c = svg`<path d="M24 20h149" stroke="#111" stroke-width="2"/>${txt(102, 17, "2900", true)}`;
    else if (kind === 2) c = svg`<path d="M34 14v14h138" fill="none" stroke="#111" stroke-width="2"/>${txt(21, 26, "420")}${txt(98, 21, "700", true)}`;
    else c = svg`<rect x="84" y="8" width="33" height="21" fill="none" stroke="#111" stroke-width="2"/><path d="M105 15l8-7M110 21l6-6" stroke="#111" stroke-width="2"/>${txt(64, 23, "190")}${txt(93, 26, "190", true)}`;
    return html`<svg width="201" height=${h - 1} viewBox="0 0 201 ${h - 1}">${c}</svg>`;
  }

  private renderCells() {
    const out: TemplateResult[] = [];
    headers.forEach((h, i) => {
      const label = h.replace(/\((.*)\)/, "");
      const unit = h.match(/\(.*\)/)?.[0];
      out.push(html`<div class=${classMap({ c: true, hd: true, act: i === 1, clip: i === 15 })}><span>${label}<span class="k">${unit}</span></span></div>`);
    });
    rows.forEach((r, idx) => {
      const a = idx === 0;
      out.push(html`<div class=${classMap({ c: true, rh: true, act: a })}>${r.n}</div>`);
      out.push(html`<div class=${classMap({ c: true, nm: true, act: a })}>${r.name}</div>`);
      out.push(html`<div class="c mono">${r.d}</div>`);
      out.push(html`<div class="c ctr"><span class="grade">Φ</span></div>`);
      out.push(html`<div class="c mono">${r.no}</div>`);
      out.push(html`<div class="c sh">${this.shape(r.shape, r.h)}</div>`);
      out.push(html`<div class="c mono d2">${r.f}</div>`);
      out.push(html`<div class="c d2">${r.desc}</div>`);
      for (const v of [r.len, r.c, "0", "0", r.w1, r.w2]) out.push(html`<div class="c mono">${v}</div>`);
      out.push(html`<div class="c d2">${r.cat}</div>`);
      out.push(html`<div class="c">绑扎</div>`);
    });
    for (let i = 0; i < 16; i++) out.push(html`<div class=${classMap({ c: true, blank6: true, rh: i === 0, nm: i === 1 })}>${i === 0 ? "6" : ""}</div>`);
    return out;
  }

  private renderCanvas() {
    const label = (x: number, y: number, t: string, col: string) => svg`
      <circle cx=${x} cy=${y} r="12.500" fill="none" stroke="#0a7a0a" stroke-dasharray="3 1"/>
      <text x=${x} y=${y + 6} text-anchor="middle" font-size="16" font-family="Liberation Sans, sans-serif" fill=${col}>${t}</text>`;
    const vr = [331.5, 530.5, 537.5, 544.5, 551.5, 889.5];
    return html`<svg class="canvas" width="1196" height="175" viewBox="170 168 1196 175">
      <defs>
        <pattern id="h" width="19" height="19" patternUnits="userSpaceOnUse"><path d="M-1 20L20 -1" stroke="#cfcfcf" stroke-width="1"/></pattern>
      </defs>
      <rect x="170" y="168" width="135" height="110" fill="url(#h)"/>
      <rect x="760" y="168" width="199" height="108" fill="url(#h)"/>
      <rect x="514" y="177" width="60" height="66" fill="#7f00ff"/>
      <rect x="523" y="243" width="15" height="5" fill="#7f00ff"/>
      <rect x="305" y="168" width="14" height="110" fill="#00e600"/>
      <rect x="741" y="168" width="19" height="110" fill="#00e600"/>
      <rect x="959" y="168" width="20" height="110" fill="#00e600"/>
      <rect x="170" y="278" width="135" height="18" fill="#00e600"/>
      <rect x="305" y="276" width="664" height="20" fill="#00e600"/>
      <path d="M325 287.500H737" stroke="#00b000"/>
      <rect x="751" y="279" width="218" height="14" fill="#0080f0"/>
      ${vr.map((x) => svg`<path d="M${x} 168V285" stroke="#e00000"/>`)}
      <path d="M170 206.500H969M170 239.500H969" stroke="#f00"/>
      <path d="M170 239H969" stroke="#f00"/>
      <path d="M170 285.500H312V168" fill="none" stroke="#fff" stroke-width="1.300"/>
      <path d="M751.500 168V285M969.500 168V285M751 285.500H969" stroke="#fff"/>
      <path d="M749.500 168V285" stroke="#f00"/>
      <path d="M325 278.500H1366M325 285.500H751M969 286.500H1366" stroke="#f00"/>
      <path d="M170 293H969" stroke="#f00" stroke-width="2"/>
      <rect x="299" y="273" width="26" height="26" fill="#7f00ff"/>
      <rect x="737" y="273" width="26" height="26" fill="#7f00ff"/>
      <rect x="955" y="273" width="27" height="26" fill="#7f00ff"/>
      <path d="M751 279h12v14h-12z" fill="#0080f0"/>
      <path d="M955 279h14v14h-14z" fill="#7f00ff"/>
      <path d="M677.500 205V305M769.500 168V280M869.500 168V285M1101.500 168V198M677 278.500H740" stroke="#0a800a"/>
      <path d="M759 278L784 299M854 272L883 299M889 265L917 300" stroke="#0a800a"/>
      <circle cx="889" cy="206" r="212" fill="none" stroke="#f00"/>
      <path d="M1188.500 193V286" stroke="#f00"/>
      <path d="M832 168L859 196L887 168M859 168V196" fill="none" stroke="#fff" stroke-width="2"/>
      ${label(312, 181, "5", "#b060b0")}${label(531, 182, "6", "#90a070")}${label(750, 181, "7", "#b04060")}${label(969, 181, "8", "#c060c0")}
      ${label(183, 285, "A1", "#c040c0")}${label(658, 285, "A1", "#c040c0")}${label(1188, 181, "2", "#d8d8d8")}
      <rect x="856" y="282" width="8" height="9" fill="#ff8000"/><path d="M856 286.500H864" stroke="#111" stroke-width="1.500"/>
      <rect x="747" y="282" width="5" height="9" fill="#a0e030"/><rect x="752" y="282" width="5" height="9" fill="#ff8000"/>
      <rect x="964" y="282" width="5" height="9" fill="#ff8000"/><rect x="969" y="282" width="5" height="9" fill="#a0e030"/>
      <rect x="223" y="254" width="4" height="39" fill="#00e600"/><path d="M225 245l4 10h-8z" fill="#00e600"/>
      <rect x="225" y="291" width="38" height="4" fill="#f00"/><path d="M272 293l-10-4v8z" fill="#f00"/>
      <path d="M234 247l5 5 5-5M239 252v6" fill="none" stroke="#0a9a0a"/>
      <path d="M261 272l10 10M271 272l-10 10" stroke="#e02020"/>
      <text transform="translate(908 187) rotate(-90)" font-size="16" font-family="Liberation Sans, sans-serif" fill="#c8c8c8">340</text>
      <text transform="translate(906 293) rotate(-90)" font-size="14" font-family="Liberation Sans, sans-serif" fill="#c8c8c8">150</text>
    </svg>`;
  }

  private renderTaskbar() {
    const tis: [number, number, boolean, boolean, TemplateResult][] = [
      [48, 0, false, false, svg`<svg width="18" height="18" viewBox="0 0 18 18"><rect x=".5" y="3" width="3" height="12" fill="none" stroke="#eee" stroke-dasharray="6 3"/><rect x="4" y="1" width="10" height="16" fill="#050d12" stroke="#eee" stroke-width="1.400"/><path d="M15 3h2v12h-2" fill="none" stroke="#eee"/></svg>`],
      [50, 1, false, false, svg`<svg width="22" height="24" viewBox="0 0 22 24"><g fill="#dfe5e8"><path d="M11 12C5 12 1 10 1 6s4-6 7-5 4 6 3 11z"/><path d="M11 12c0-6 2-11 6-11s5 5 4 7-5 4-10 4z"/><path d="M11 12c6 0 10 2 10 6s-4 6-7 5-4-6-3-11z"/><path d="M11 12c0 6-2 11-6 11s-5-5-4-7 5-4 10-4z"/></g></svg>`],
      [50, 2, false, false, svg`<svg width="24" height="26" viewBox="0 0 24 26"><circle cx="12" cy="14" r="8" fill="none" stroke="#eee" stroke-width="3"/><path d="M5 13h14" stroke="#eee" stroke-width="2.500"/><path d="M21 4C15 2 6 8 3 20" fill="none" stroke="#bbb"/></svg>`],
      [50, 3, false, false, svg`<svg width="28" height="28" viewBox="0 0 28 28"><circle cx="11" cy="16" r="8" fill="none" stroke="#9aa" stroke-width="2"/><circle cx="12" cy="16" r="4" fill="none" stroke="#9aa" stroke-width="1.500"/><path d="M20 2c3 0 4 3 4 6l2 3H14l2-3c0-3 1-6 4-6z" fill="#f2b230"/></svg>`],
      [50, 0, false, false, svg`<svg width="24" height="26" viewBox="0 0 24 26"><circle cx="12" cy="13" r="9" fill="none" stroke="#0a78d8" stroke-width="4.500"/><path d="M5 13h15" stroke="#0a78d8" stroke-width="3"/><path d="M14 17h10v5H14z" fill="#050d12"/></svg>`],
      [50, 0, false, false, svg`<svg width="26" height="26" viewBox="0 0 26 26"><circle cx="13" cy="14" r="9" fill="#e8f4fc" stroke="#1a90e0" stroke-width="3.500"/><path d="M6 13h14" stroke="#1a90e0" stroke-width="2.500"/><path d="M24 3C17 1 6 10 2 24" fill="none" stroke="#f0c020" stroke-width="2"/></svg>`],
      [40, 2, false, false, svg`<svg width="24" height="24" viewBox="0 0 24 24"><path d="M2 2h8l2 3h10v17H2z" fill="#f6d67a"/><rect x="2" y="8" width="20" height="3" fill="#fff3c4"/><path d="M8 22v-7h8v7h-3v-3h-2v3z" fill="#2a90d8"/></svg>`],
      [40, 10, true, false, svg`<svg width="26" height="28" viewBox="0 0 26 28"><path d="M22 3C12 1 3 8 3 17c0 7 6 10 11 8 6-2 8-9 3-12 1-3 3-6 5-10z" fill="#1a80e0"/><path d="M12 12c-4 1-5 8-1 10 4 1 6-3 4-6z" fill="#8ad0f8"/></svg>`],
      [40, 9, true, false, svg`<svg width="24" height="26" viewBox="0 0 24 26"><ellipse cx="12" cy="13" rx="10" ry="12" fill="#8ccc50" stroke="#e8f4d0"/><path d="M6 13h12M8 9c3-3 7-3 9 0M8 17c3 3 7 3 9 0" stroke="#fff" stroke-width="2" fill="none"/></svg>`],
      [48, 5, true, true, svg`<svg width="24" height="24" viewBox="0 0 24 24"><rect width="24" height="24" rx="4" fill="#0a90e8"/><path d="M12 4v16M5 12c0-3 4-3 4 0s-4 3-4 0zM15 12c0-3 4-3 4 0s-4 3-4 0z" fill="none" stroke="#fff" stroke-width="2"/></svg>`],
      [40, 5, true, false, svg`<svg width="24" height="24" viewBox="0 0 24 24"><rect width="24" height="24" rx="2" fill="#f2a020"/><path d="M5 5h12v15H5z" fill="#f8f0d8" stroke="#a07020"/><path d="M7 9h8M7 12h8M7 15h6" stroke="#a07020"/><path d="M21 2L12 16" stroke="#d04020" stroke-width="2"/></svg>`],
    ];
    return html`<div class="task">
      <div class="start"><svg width="16" height="16" viewBox="0 0 16 16"><path d="M0 2.300L6.800 1.300V7.500H0zM7.600 1.200L16 0V7.500H7.600zM0 8.300H6.800V14.700L0 13.700zM7.600 8.300H16V16L7.600 14.800z" fill="#fff"/></svg></div>
      <div class="search">
        <svg width="22" height="22" viewBox="0 0 22 22"><circle cx="11" cy="11" r="9" fill="none" stroke="#e6e6e6" stroke-width="2.500"/></svg>
        <span>在这里输入你要搜索的内容</span>
        <svg width="12" height="18" viewBox="0 0 12 18"><rect x="3.500" y="1" width="5" height="10" rx="2.500" fill="none" stroke="#8c8c8c"/><path d="M1 7c0 7 10 7 10 0M6 13v4M3 17h6" fill="none" stroke="#8c8c8c"/></svg>
      </div>
      ${tis.map(([w, ml, run, cur, ic]) => html`<div class=${classMap({ ti: true, run, cur })} style="width:${w}px;margin-left:${ml}px">${ic}</div>`)}
      <div class="trays">
        <div class="tray" style="width:40px">链接</div>
        <div class="tray" style="width:18px"><svg width="12" height="8" viewBox="0 0 12 8"><path d="M1 7l5-5 5 5" fill="none" stroke="#eee" stroke-width="1.300"/></svg></div>
        <div class="tray" style="width:32px"><svg width="18" height="14" viewBox="0 0 18 14"><rect x="4" y="5" width="12" height="8" fill="none" stroke="#eee"/><rect x="5" y="6" width="7" height="6" fill="#eee"/><path d="M2 0v5M5 0v5M0 4h7" stroke="#eee"/></svg></div>
        <div class="tray" style="width:18px"><svg width="15" height="15" viewBox="0 0 15 15"><path d="M1 14A13 13 0 0 1 14 1M4 14A10 10 0 0 1 14 4M7 14a7 7 0 0 1 7-7" fill="none" stroke="#ccc"/><circle cx="12" cy="12" r="2" fill="#eee"/></svg></div>
        <div class="tray" style="width:24px"><svg width="16" height="15" viewBox="0 0 16 15"><path d="M1 5h3l4-4v13l-4-4H1z" fill="none" stroke="#eee"/><path d="M10 4c2 2 2 5 0 7M13 2c3 3 3 8 0 11" fill="none" stroke="#bbb"/></svg></div>
        <div class="tray" style="width:34px"><svg width="23" height="15" viewBox="0 0 23 15"><rect x=".5" y=".5" width="22" height="14" fill="none" stroke="#eee"/><path d="M3 4h17M3 7h17" stroke="#eee" stroke-dasharray="1 1"/><path d="M6 11h11" stroke="#eee"/></svg></div>
        <div class="tray" style="width:24px;font-size:14px">中</div>
        <div class="tray" style="width:32px"><svg width="16" height="17" viewBox="0 0 16 17"><rect x="1" y="1" width="14" height="15" rx="3" fill="#f0501e"/><path d="M12 5c-2-2-8-1-7 2s7 1 7 4-5 3-8 1" fill="none" stroke="#fff" stroke-width="2.200"/></svg></div>
        <div class="tray clock" style="width:78px"><span>9:58</span><span>2018/7/11</span></div>
        <div class="tray notif" style="width:50px"><svg width="16" height="18" viewBox="0 0 16 18"><path d="M0 0h16v13H6l-3 4v-4H0z" fill="#eee"/><path d="M3 4h10M3 7h10M3 10h7" stroke="#333"/></svg><span class="one">1</span></div>
      </div>
    </div>`;
  }

  override render() {
    return html`<div class="app">
      <div class="title">
        <svg width="14" height="14" viewBox="0 0 14 14"><rect width="14" height="14" rx="2" fill="#0a90e8"/><path d="M7 2v10M2 7c0-2 3-2 3 0s-3 2-3 0zM9 7c0-2 3-2 3 0s-3 2-3 0z" fill="none" stroke="#fff" stroke-width="1.300"/></svg>
        <span class="txt">广联达BIM钢筋算量软件 GGJ2013 - [C:\\Users\\Administrator.PC-20141127NRHM\\Desktop\\白龙村-2018-02-02-19-24-35(2666版).GGJ12]</span>
        <div class="winbtns">
          <svg style="margin-left:0" width="10" height="10" viewBox="0 0 10 10"><path d="M0 5.500H10" stroke="#222"/></svg>
          <svg width="10" height="10" viewBox="0 0 10 10"><path d="M.5 2.500h7v7h-7zM2.500 2.500v-2h7v7h-2" fill="none" stroke="#222"/></svg>
          <svg style="margin-left:10px;margin-right:20px" width="11" height="11" viewBox="0 0 11 11"><path d="M.5 .5l10 10M10.500 .5l-10 10" stroke="#222"/></svg>
        </div>
      </div>
      <div class="badge">67</div>

      <div class="menu">
        ${menus.map(([t, w]) => html`<span class="m" style="width:${w}px">${t}</span>`)}
        <div class="it" style="width:86px;padding-left:2px">${this.icon("change")}<span>新建变更</span><i class="arr"></i></div>
        <div class="it" style="width:64px;padding-left:0">${this.icon("xiao")}<span>广小二</span></div>
        <div class="cad">CAD图或者图片导入后?.</div>
        <div class="it" style="width:118px;padding-left:0;gap:3px">${this.icon("user", 17)}<span>13907298339</span><i class="arr"></i></div>
        <span class="m" style="width:62px">造价豆:0</span>
        ${this.icon("bell", 18)}
        <span style="margin-left:28px">${this.more()}</span>
      </div>

      <div class="strip tb1">
        <div class="grp" style="width:151px">${tb1a.map((i) => this.item(i))}<span style="margin-left:16px">${this.more()}</span></div>
        <div class="grp m2 p2" style="width:548px">${tb1b.map((i) => this.item(i))}<span style="margin-left:37px">${this.more()}</span></div>
        <div class="grp m2 p3" style="width:663px">${tb1c.map((i) => this.item(i))}<span style="margin-left:19px">${this.more()}</span></div>
      </div>

      <div class="body">
        <div class="nav">
          <div class="navhead"><span>模块导航栏</span>
            <svg width="12" height="12" viewBox="0 0 12 12"><path d="M4 1h4v6h2v1H7v3H5V8H2V7h2z" fill="#fff"/></svg>
            <svg style="margin:0 4px 0 6px" width="10" height="10" viewBox="0 0 10 10"><path d="M1 1l8 8M9 1l-8 8" stroke="#fff"/></svg>
          </div>
          <div class="navbtn">工程设置</div>
          <div class="navbtn tall">绘图输入</div>
          <div class="treebox">
            <div class="treetools">
              <svg width="18" height="18" viewBox="0 0 18 18"><path d="M5 1v8M1 5h8" stroke="#222" stroke-width="2"/><path d="M12 8v9M8 12.500h9" stroke="#0a8a7a" stroke-width="2.400"/></svg>
              <svg width="18" height="18" viewBox="0 0 18 18"><path d="M1 5h8" stroke="#222" stroke-width="2"/><path d="M7 12.500h10" stroke="#0a8a7a" stroke-width="2.400"/></svg>
            </div>
            <div class="treewrap">
              <div class="treelist">${this.renderTree()}</div>
              <div class="vbar">
                <svg width="10" height="8" viewBox="0 0 10 8"><path d="M1 6l4-4 4 4" fill="none" stroke="#555" stroke-width="1.800"/></svg>
                <div class="th"></div>
                <svg width="10" height="8" viewBox="0 0 10 8"><path d="M1 2l4 4 4-4" fill="none" stroke="#555" stroke-width="1.800"/></svg>
              </div>
            </div>
          </div>
          <div class="navbtn">单构件输入</div>
          <div class="navbtn">报表预览</div>
        </div>

        <div class="main">
          <div class="strip pad"><div class="grp">${tb2.map((i) => this.item(i))}</div></div>
          <div class="strip s2 pad">
            <div class="grp">${tb3a.map((i) => this.item(i))}</div>
            <div class="grp m3">${tb3b.map((i) => this.item(i))}</div>
          </div>
          <div class="strip s3 pad">
            <div class="grp">${tb4a.map((i) => this.item(i))}</div>
            <div class="grp m2">${this.item({ grip: true, w: 8 })}<div class="blank"></div></div>
          </div>
          ${this.renderCanvas()}
          <div class="strip snap pad">
            <div class="grp">${snapA.map((i) => this.item(i))}</div>
            <div class="grp m1">${snapB.map((i) => this.item(i))}</div>
            <div class="grp m2">${snapC.map((i) => this.item(i))}</div>
          </div>
          <div class="lower">
            <div class="dock">
              <svg width="11" height="11" viewBox="0 0 11 11"><rect x=".5" y=".5" width="10" height="10" fill="#eee" stroke="#555"/><path d="M1 1l9 9M10 1l-9 9" stroke="#a03030"/></svg>
            </div>
            <div class="right">
              <div class="gtb">${gridTb.map((i) => this.item(i))}</div>
              <div class="sheet">
                <div class="cells">${this.renderCells()}</div>
                <div class="redbar" style="left:590px;top:79px;width:197px;height:9px"></div>
                <div class="redbar" style="left:590px;top:149px;width:172px;height:13px"></div>
              </div>
              <div class="hbar">
                <svg width="7" height="10" viewBox="0 0 7 10"><path d="M6 1L2 5l4 4" fill="none" stroke="#444" stroke-width="1.800"/></svg>
                <div class="th"></div>
                <svg width="7" height="10" viewBox="0 0 7 10"><path d="M1 1l4 4-4 4" fill="none" stroke="#444" stroke-width="1.800"/></svg>
              </div>
            </div>
          </div>
        </div>
      </div>

      <div class="status">
        <div class="mono" style="width:148px">X=91034 Y=-11959</div>
        <div style="width:77px">层高:<span class="k">2.8m</span></div>
        <div style="width:98px">底标高:<span class="k">20.35m</span></div>
        <div class="mono" style="width:48px">1(2)</div>
        <div style="width:913px">按鼠标左键指定第一个角点，或拾取构件图元</div>
        <div class="mono" style="flex:1">656.1 FPS</div>
      </div>
      ${this.renderTaskbar()}

      <div class="ime">
        <div class="s">S</div>
        <div class="bar">
          <b>英</b><span>’,</span>
          <span><svg width="17" height="17" viewBox="0 0 17 17"><circle cx="8.500" cy="8.500" r="7.500" fill="none" stroke="#1a78c8" stroke-width="1.500"/><path d="M6 6v2M11 6v2M5 11c2 2 5 2 7 0" fill="none" stroke="#1a78c8"/></svg></span>
          <span><svg width="12" height="17" viewBox="0 0 12 17"><rect x="3.500" y="1" width="5" height="10" rx="2.500" fill="#1a78c8"/><path d="M1 8c0 6 10 6 10 0M6 13v3" fill="none" stroke="#1a78c8" stroke-width="1.400"/></svg></span>
          <span><svg width="17" height="13" viewBox="0 0 17 13"><rect width="17" height="13" rx="2" fill="#1a78c8"/><path d="M3 4h11M3 7h11M5 10h7" stroke="#fff" stroke-dasharray="1.500 1"/></svg></span>
          <span><svg width="17" height="17" viewBox="0 0 17 17"><circle cx="7" cy="5" r="3" fill="#b8c4d0"/><path d="M1 15c0-7 11-7 11 0z" fill="#b8c4d0"/><rect x="9" y="10" width="8" height="6" fill="#e0e6ec"/></svg></span>
          <span><svg width="16" height="15" viewBox="0 0 16 15"><path d="M5 0l3 2 3-2 5 3-2 4-2-1v9H4V6L2 7 0 3z" fill="#1a78c8"/></svg></span>
          <span><svg width="16" height="16" viewBox="0 0 16 16"><path d="M15 4a4 4 0 0 1-5 4l-6 7-3-3 7-6a4 4 0 0 1 5-5l-3 3 2 2z" fill="#1a78c8"/></svg></span>
        </div>
      </div>
    </div>`;
  }
}
